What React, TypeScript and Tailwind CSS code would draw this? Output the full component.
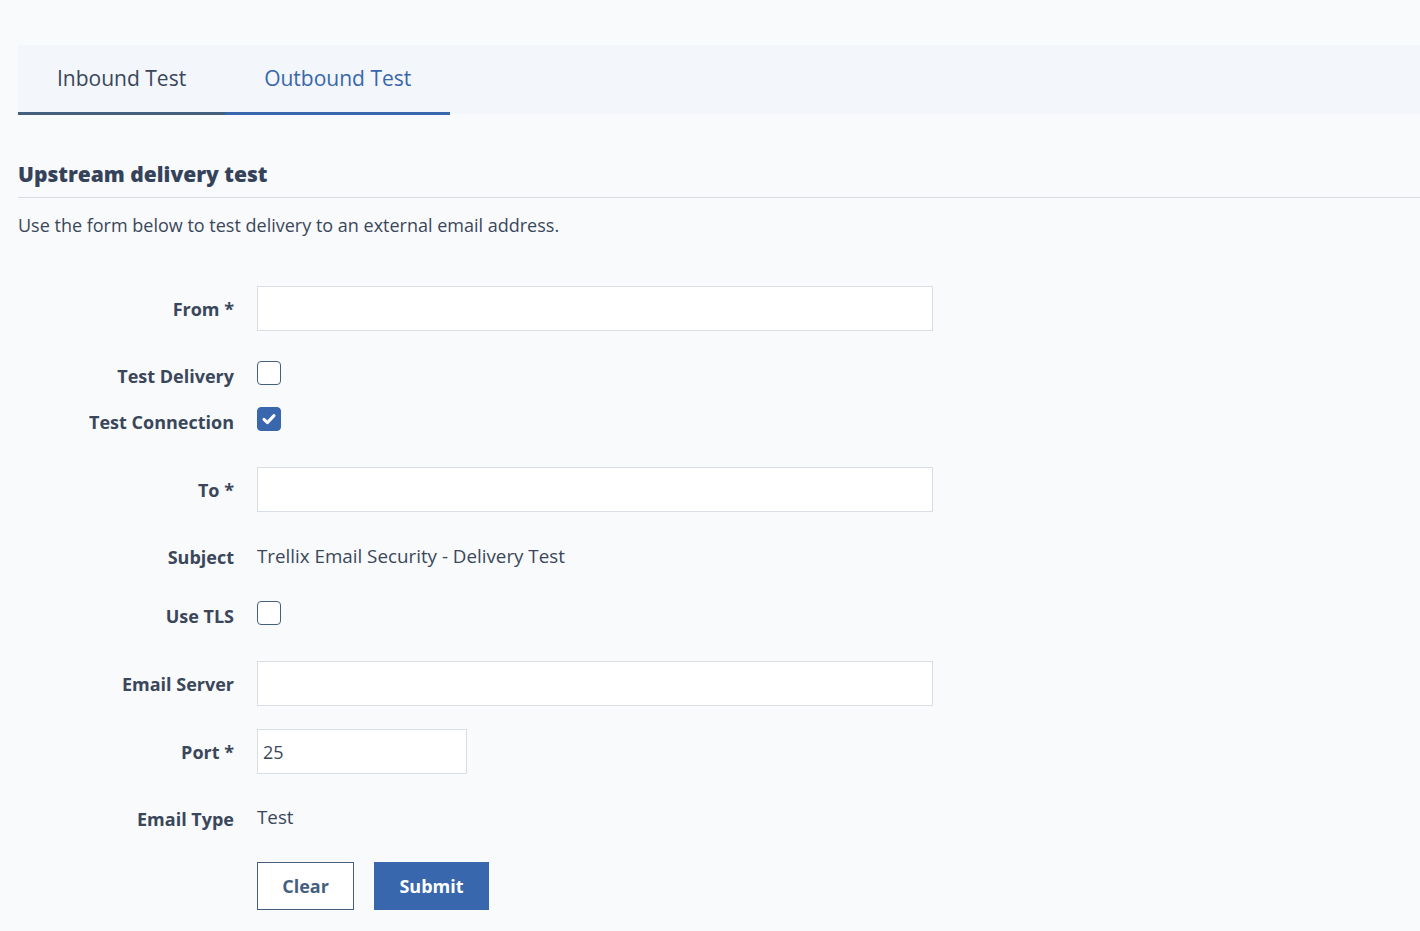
import React, { useState } from "react";

const font = { fontFamily: '"Open Sans", "Noto Sans", sans-serif' };

const Checkbox = ({ checked, onChange }: { checked: boolean; onChange: () => void }) => (
  <button
    type="button"
    onClick={onChange}
    className={
      checked
        ? "flex h-6 w-6 items-center justify-center rounded-[4px] border border-[#3867ad] bg-[#3867ad]"
        : "flex h-6 w-6 items-center justify-center rounded-[4px] border border-[#45607f] bg-white"
    }
  >
    {checked && (
      <svg width="16" height="16" viewBox="0 0 16 16">
        <path d="M3 8.4 L6.4 11.6 L13 4.6" fill="none" stroke="white" strokeWidth="3" strokeLinecap="round" strokeLinejoin="round" />
      </svg>
    )}
  </button>
);

const Row = ({
  label,
  className,
  labelClass,
  children,
}: {
  label: string;
  className?: string;
  labelClass?: string;
  children: React.ReactNode;
}) => (
  <div className={"flex items-center " + (className ?? "")}>
    <div className={"w-[216px] shrink-0 text-right text-[18px] leading-[24px] font-bold text-[#3a475a] " + (labelClass ?? "")}>
      {label}
    </div>
    <div className="ml-[23px] flex items-center">{children}</div>
  </div>
);

const TextInput = ({ value, onChange, width }: { value: string; onChange: (v: string) => void; width: string }) => (
  <input
    value={value}
    onChange={(e) => onChange(e.target.value)}
    className={"h-[45px] border border-[#d9dee6] bg-white px-[5px] text-[18px] text-[#3a475a] outline-none " + width}
  />
);

export default function App() {
  const [tab, setTab] = useState("outbound");
  const [from, setFrom] = useState("");
  const [to, setTo] = useState("");
  const [server, setServer] = useState("");
  const [port, setPort] = useState("25");
  const [testDelivery, setTestDelivery] = useState(false);
  const [testConnection, setTestConnection] = useState(true);
  const [useTls, setUseTls] = useState(false);

  return (
    <div className="min-h-[931px] bg-[#f9fafc] pt-[45px] pl-[18px]" style={font}>
      <div className="flex h-[69px] bg-[#f3f6fa]">
        <button
          onClick={() => setTab("inbound")}
          className="flex h-[70px] items-center border-b-[3px] border-[#45607f] px-[39px] pt-[1px] text-[21px] text-[#3a475a]"
        >
          Inbound Test
        </button>
        <button
          onClick={() => setTab("outbound")}
          className="flex h-[70px] items-center border-b-[3px] border-[#3867ad] px-[39px] pt-[1px] text-[21px] text-[#3867ad]"
        >
          Outbound Test
        </button>
      </div>

      <div className="mt-[46px] border-b border-[#d8dbe4] pb-[9px]">
        <h2 className="text-[21px] leading-[28px] font-extrabold text-[#35435a]">Upstream delivery test</h2>
      </div>
      <p className="mt-[15px] text-[18px] leading-[24px] text-[#3a475a]">
        Use the form below to test delivery to an external email address.
      </p>

      <form className="mt-[49px]" onSubmit={(e) => e.preventDefault()}>
        <Row label="From *" className="h-[45px]">
          <TextInput value={from} onChange={setFrom} width="w-[676px]" />
        </Row>
        <Row label="Test Delivery" className="mt-[30px] h-6" labelClass="pt-[6px]">
          <Checkbox checked={testDelivery} onChange={() => setTestDelivery(!testDelivery)} />
        </Row>
        <Row label="Test Connection" className="mt-[22px] h-6" labelClass="pt-[6px]">
          <Checkbox checked={testConnection} onChange={() => setTestConnection(!testConnection)} />
        </Row>
        <Row label="To *" className="mt-[36px] h-[45px]">
          <TextInput value={to} onChange={setTo} width="w-[676px]" />
        </Row>
        <Row label="Subject" className="mt-[32px] h-6" labelClass="pt-[2px]">
          <span className="text-[18.8px] leading-[24px] text-[#3a475a]">Trellix Email Security - Delivery Test</span>
        </Row>
        <Row label="Use TLS" className="mt-[33px] h-6" labelClass="pt-[6px]">
          <Checkbox checked={useTls} onChange={() => setUseTls(!useTls)} />
        </Row>
        <Row label="Email Server" className="mt-[36px] h-[45px]">
          <TextInput value={server} onChange={setServer} width="w-[676px]" />
        </Row>
        <Row label="Port *" className="mt-[23px] h-[45px]">
          <TextInput value={port} onChange={setPort} width="w-[210px]" />
        </Row>
        <Row label="Email Type" className="mt-[32px] h-6" labelClass="pt-[2px]">
          <span className="-mt-[2px] text-[18.8px] leading-[24px] text-[#3a475a]">Test</span>
        </Row>
        <div className="mt-[32px] ml-[239px] flex gap-[20px]">
          <button
            type="button"
            onClick={() => {
              setFrom("");
              setTo("");
              setServer("");
              setPort("25");
            }}
            className="h-[48px] w-[97px] border border-[#45607f] bg-white text-[18px] font-bold text-[#45607f]"
          >
            Clear
          </button>
          <button type="submit" className="h-[48px] w-[115px] bg-[#3867ad] text-[18px] font-bold text-white">
            Submit
          </button>
        </div>
      </form>
    </div>
  );
}
